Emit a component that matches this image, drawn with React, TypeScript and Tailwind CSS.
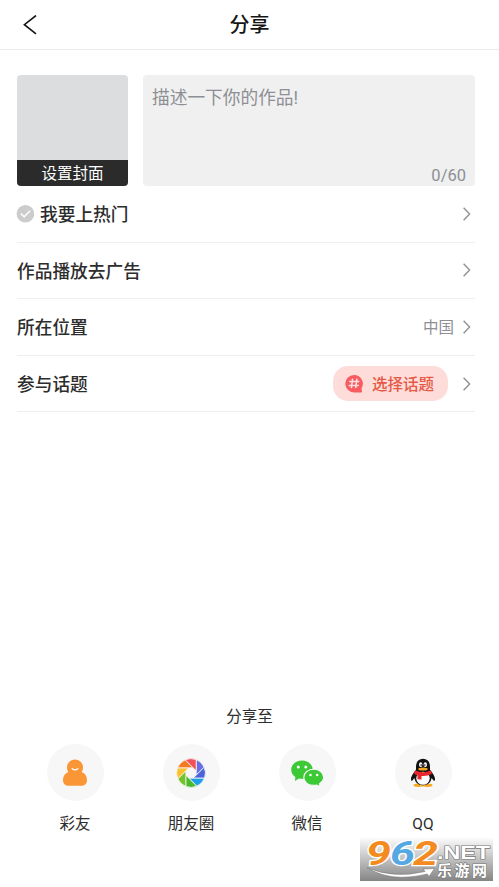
import React from 'react';

const options = [
  { label: '我要上热门', checkable: true },
  { label: '作品播放去广告' },
  { label: '所在位置', value: '中国' },
  { label: '参与话题', topic: '选择话题' },
];

const bladeColors = ['#6670e0', '#4a63d8', '#1ea0e6', '#4cb82e', '#76c22b', '#fbc02d', '#f47a20', '#f4505a'];

const ChevronIcon = () => (
  <svg className="h-4 w-2 shrink-0" viewBox="0 0 8 16" fill="none" stroke="#8f9195" strokeWidth="1.4">
    <path d="M.6 1.7 6.6 8 .6 14.3" />
  </svg>
);

const CheckIcon = () => (
  <svg className="mr-[6px] -ml-px h-[18px] w-[18px]" viewBox="0 0 18 18" fill="none">
    <circle cx="9.4" cy="8.8" r="8.8" fill="#cccccc" />
    <path d="M4.8 8.6 8.2 11.8 14.2 5.8" stroke="#fff" strokeWidth="1.5" />
  </svg>
);

const TopicIcon = () => (
  <svg className="h-[18px] w-[18px]" viewBox="0 0 18 18" fill="none">
    <path d="M9 0a8.7 8.7 0 1 0 0 17.4h7.2q.9 0 .8-.9l-.5-3.2A8.7 8.7 0 0 0 9 0Z" fill="#f85b60" />
    <path d="M7.6 3.7 6.4 13.100M11.900 3.700l-1.200 9.400M4.100 6.500h10.200M3.700 10.500h10.200" stroke="#ffe3e2" strokeWidth="1.500" />
  </svg>
);

const FriendIcon = () => (
  <svg className="h-[30px] w-[30px]" viewBox="0 0 30 30">
    <path
      d="M15 1.500a8 8 0 0 0-8 8c0 1.800.5 3.200 1.300 4.600C5 15.400 3 18.400 3 21.900 3 25.200 5 27.700 8.200 27.700h13.600c3.200 0 5.200-2.500 5.200-5.800 0-3.500-2-6.500-5.300-7.800.8-1.400 1.300-2.800 1.300-4.600a8 8 0 0 0-8-8Z"
      fill="#fb9637"
    />
    <path d="M12.200 10.700q2.800 2.200 5.600 0" stroke="#fff" strokeWidth="1.400" fill="none" strokeLinecap="round" />
  </svg>
);

const MomentsIcon = () => {
  const inner = 5.2;
  const outer = 14.4;
  const point = (radius: number, deg: number) => {
    const rad = (deg * Math.PI) / 180;
    return `${(radius * Math.cos(rad)).toFixed(2)} ${(radius * Math.sin(rad)).toFixed(2)}`;
  };
  const swing = (Math.acos(inner / outer) * 180) / Math.PI;
  const corner = inner / Math.cos(Math.PI / 8);

  return (
    <svg className="h-[30px] w-[30px]" viewBox="-15 -15 30 30">
      {bladeColors.map((color, i) => {
        const a = i * 45;
        return (
          <path
            key={i}
            d={`M${point(corner, a - 22.5)}L${point(outer, a - swing)}A${outer} ${outer} 0 0 1 ${point(outer, a + 45 - swing)}L${point(corner, a + 22.5)}Z`}
            fill={color}
            stroke="#f7f7f7"
            strokeWidth=".8"
          />
        );
      })}
    </svg>
  );
};

const WechatIcon = () => (
  <svg className="h-[30px] w-[34px]" viewBox="0 0 34 30">
    <path d="M12 2.500C5.900 2.500 1.200 6.500 1.200 11.700c0 3 1.600 5.500 4.100 7.200l-.3 4 3.900-2.500c1 .2 2 .4 3.100.4 6.100 0 10.700-4 10.700-9.100S18.100 2.500 12 2.500Z" fill="#3bca36" />
    <path
      d="M23.700 11.200c-5.500 0-9.900 3.500-9.900 8.100s4.400 8.100 9.900 8.100c1.100 0 2.100-.1 3.100-.4l3.300 1.700-.6-3.100c2.500-1.500 4.100-3.700 4.100-6.300 0-4.600-4.400-8.100-9.900-8.100Z"
      fill="#3bca36"
      stroke="#f7f7f7"
      strokeWidth="1.100"
    />
    <g fill="#fff">
      <circle cx="8.300" cy="9" r="1.500" />
      <circle cx="15.800" cy="9" r="1.500" />
      <circle cx="20.500" cy="17" r="1.250" />
      <circle cx="27.200" cy="17" r="1.250" />
    </g>
  </svg>
);

const QQIcon = () => (
  <svg className="h-[30px] w-[26px]" viewBox="0 0 26 30">
    <ellipse cx="8.500" cy="27.300" rx="5" ry="1.700" fill="#f7a823" />
    <ellipse cx="17.500" cy="27.300" rx="5" ry="1.700" fill="#f7a823" />
    <path d="M13 .8C8.300.8 6 4.200 6 8.600v3.200C4 14.500 1 18 1 21c0 1.800.7 2.200 1.400 1.500l2-2.500c.7 4.300 3.600 7.200 8.600 7.200s7.900-2.900 8.600-7.200l2 2.500c.7.700 1.400.3 1.400-1.500 0-3-3-6.500-5-9.200V8.600C20 4.200 17.700.8 13 .8Z" fill="#111" />
    <ellipse cx="13" cy="20.300" rx="6.700" ry="6.500" fill="#fff" />
    <path d="M5 12.300Q13 16 21 12.300l.8 3.700Q17 18.500 11.500 18v3.600l-4-.4v-3.700L4.200 15.900Z" fill="#e8262b" />
    <ellipse cx="10.700" cy="6.700" rx="1.700" ry="2.400" fill="#fff" />
    <ellipse cx="15.300" cy="6.700" rx="1.700" ry="2.400" fill="#fff" />
    <circle cx="11.200" cy="7" r=".8" />
    <circle cx="14.800" cy="7" r=".8" />
    <ellipse cx="13" cy="11" rx="4.800" ry="1.600" fill="#f7a823" />
  </svg>
);

const shareTargets = [
  { name: '彩友', icon: <FriendIcon /> },
  { name: '朋友圈', icon: <MomentsIcon /> },
  { name: '微信', icon: <WechatIcon /> },
  { name: 'QQ', icon: <QQIcon /> },
];

const SiteBadge = () => (
  <svg className="absolute top-[838px] left-[360px] h-[43px] w-[133px] overflow-visible" viewBox="0 0 133 43">
    <defs>
      <linearGradient id="badge" x1="0" y1="0" x2="0" y2="1">
        <stop offset="0" stopColor="#fbfbfb" />
        <stop offset="1" stopColor="#858585" />
      </linearGradient>
    </defs>
    <rect width="133" height="43" fill="url(#badge)" />
    <path d="M7 29.500Q33 41 65 33.500l-2-2.500 11.500-.5-5.500 8-1.800-2.500Q31 45 7 29.500Z" fill="#fff" stroke="#777" strokeWidth=".6" />
    <g
      fontFamily="Roboto, sans-serif"
      fontWeight="700"
      fontStyle="italic"
      fontSize="34"
      stroke="#fff"
      strokeWidth="2.500"
      paintOrder="stroke"
    >
      <text x="6" y="27" textLength="25" lengthAdjust="spacingAndGlyphs" fill="#f38b20">9</text>
      <text x="30" y="27" textLength="25" lengthAdjust="spacingAndGlyphs" fill="#56a8e2">6</text>
      <text x="53" y="27" textLength="25" lengthAdjust="spacingAndGlyphs" fill="#f38b20">2</text>
    </g>
    <g fill="#fff" stroke="#777" strokeWidth="1.200" paintOrder="stroke" fontFamily="'Liberation Sans', 'Noto Sans CJK SC', sans-serif">
      <text x="77" y="20.500" textLength="53" lengthAdjust="spacingAndGlyphs" fontSize="18" fontWeight="bold">.NET</text>
      <text x="77" y="38" textLength="50" fontSize="15" fontWeight="bold">乐游网</text>
    </g>
  </svg>
);

const App = () => {
  return (
    <div className="relative h-[887px] w-[499px] overflow-hidden bg-white font-['Roboto','Noto_Sans_CJK_SC',sans-serif] text-[#2d2d2d]">
      <header className="grid h-[50px] grid-cols-[60px_1fr_60px] items-center border-b border-[#ececec]">
        <svg className="ml-[22px] h-5 w-4" viewBox="0 0 16 20" fill="none" stroke="#151515" strokeWidth="1.6">
          <path d="M14 .5 2.400 9.700 14 18.900" />
        </svg>
        <h1 className="text-center text-[20px] font-medium text-[#151515]">分享</h1>
      </header>

      <main className="pr-[24px] pl-[17px]">
        <div className="flex gap-[15px] pt-[25px]">
          <div className="flex h-[111px] w-[111px] flex-col justify-end overflow-hidden rounded bg-[#dcdddf]">
            <div className="flex h-[26px] items-center justify-center bg-[#2b2b2b] pt-[3px] text-[15.500px] text-white">设置封面</div>
          </div>
          <div className="flex h-[111px] flex-1 flex-col justify-between rounded bg-[#f0f0f0] px-[9px] pt-2.5 text-[#8d8f94]">
            <p className="text-[17.700px] leading-[27px]">描述一下你的作品!</p>
            <span className="self-end text-[16.500px] leading-[21px]">0/60</span>
          </div>
        </div>

        {options.map((option) => (
          <div key={option.label} className="flex h-[56.600px] items-center border-b border-[#eeeeee] pr-1">
            {option.checkable && <CheckIcon />}
            <span className="pt-[3px] text-[17.700px] font-medium">{option.label}</span>
            <div className="ml-auto flex items-center">
              {option.value && <span className="mr-[9px] pt-[3px] text-[15.500px] text-[#8d8f94]">{option.value}</span>}
              {option.topic && (
                <div className="mr-[15px] flex h-[35px] w-[115px] items-center gap-[9px] rounded-[15px] bg-[#fedcda] pl-3">
                  <TopicIcon />
                  <span className="pt-1 text-[15.500px] font-medium text-[#e65a45]">{option.topic}</span>
                </div>
              )}
              <ChevronIcon />
            </div>
          </div>
        ))}
      </main>

      <section className="mt-[293px]">
        <h2 className="text-center text-[15.500px] leading-6">分享至</h2>
        <div className="mt-[15px] grid grid-cols-4 pr-[18px] pl-[17px]">
          {shareTargets.map((target) => (
            <div key={target.name} className="flex flex-col items-center">
              <div className="flex h-[57px] w-[57px] items-center justify-center rounded-full bg-[#f7f7f7]">{target.icon}</div>
              <span className="mt-[11px] text-[15.500px] leading-6">{target.name}</span>
            </div>
          ))}
        </div>
      </section>

      <SiteBadge />
    </div>
  );
};

export default App;
